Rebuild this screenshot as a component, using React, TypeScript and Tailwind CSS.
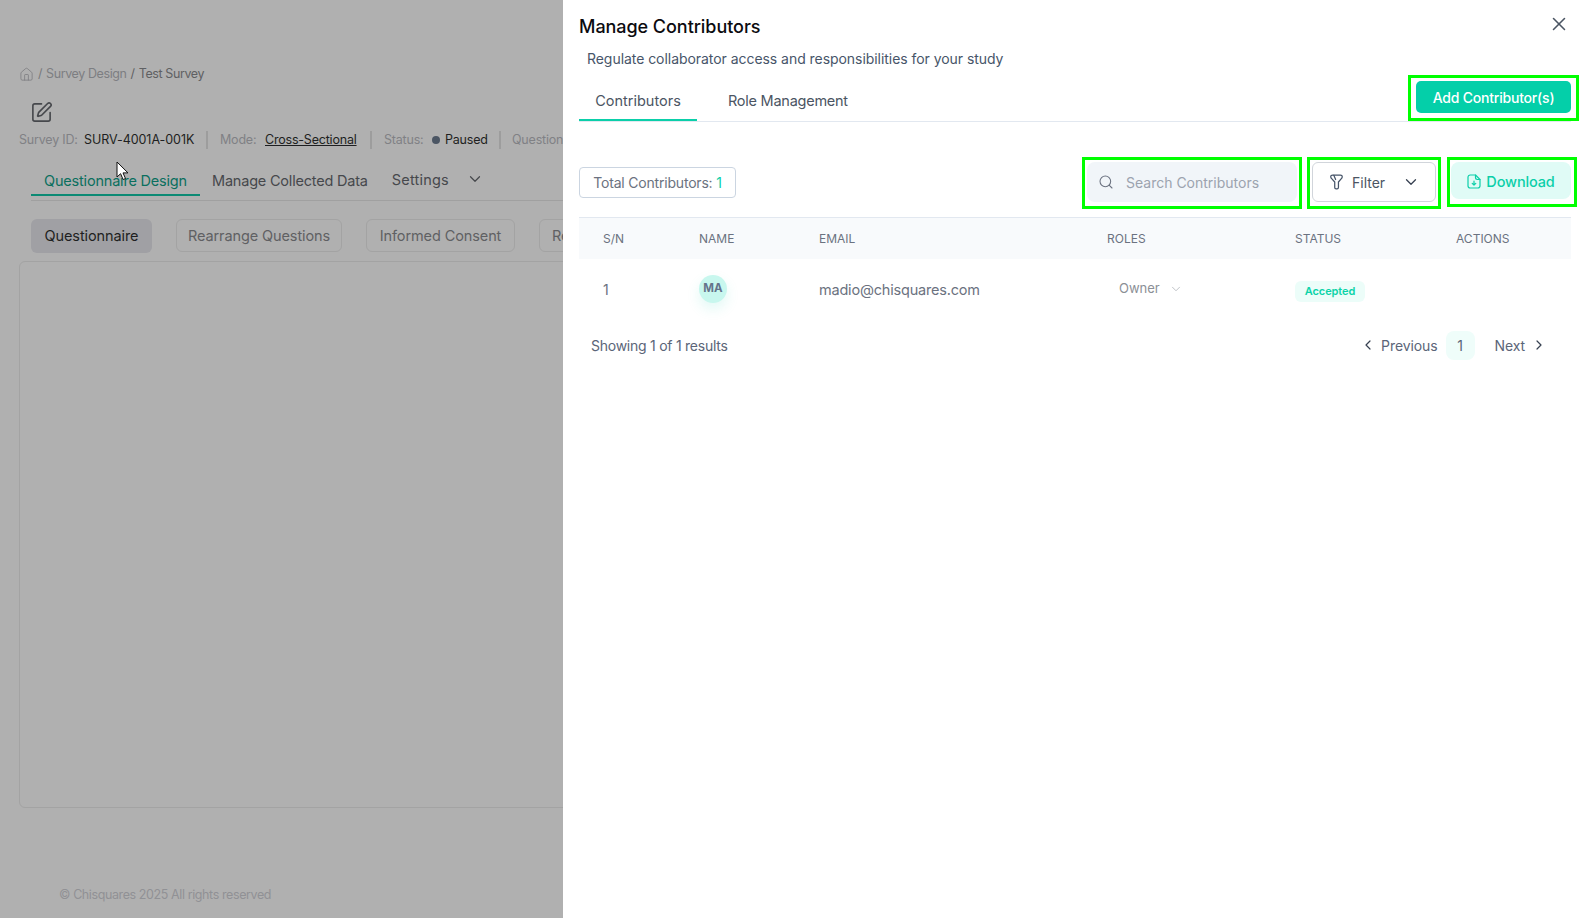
import React from 'react';
import { ChevronDown, ChevronLeft, ChevronRight, House, Search, SquarePen, X } from 'lucide-react';

const FunnelIcon = () => (
  <svg width="15" height="16" viewBox="0 0 16 18" fill="none" stroke="#475569" strokeWidth="1.4" strokeLinejoin="round" strokeLinecap="round">
    <path d="M1.5 3.2C1.5 2 2.5 1.2 3.6 1.2h8.8c1.1 0 2.1.8 2.1 2 0 .7-.3 1.3-.8 1.8L10.2 9v6c0 1.1-.8 1.8-1.6 1.8H7.6c-.9 0-1.6-.7-1.6-1.6V9L2.3 5c-.5-.5-.8-1.1-.8-1.8z" />
    <path d="M5 1.5 7 6.2" />
  </svg>
);

const DownloadIcon = () => (
  <svg width="14" height="15" viewBox="0 0 14 15" fill="none" stroke="#0bcfa9" strokeWidth="1.2" strokeLinecap="round" strokeLinejoin="round">
    <path d="M8.5 1H3.2C1.9 1 1 1.9 1 3.2v8.6C1 13.1 1.9 14 3.2 14h7.6c1.3 0 2.2-.9 2.2-2.2V5.5L8.5 1z" />
    <path d="M8.5 1v2.6c0 1.1.8 1.9 1.9 1.9H13" />
    <path d="M7 7v4M5.2 9.4 7 11.2l1.8-1.8" />
  </svg>
);

const Cursor = () => (
  <svg width="14" height="20" viewBox="0 0 14 20" className="absolute left-[116px] top-[161px]">
    <path d="M1 1v15l3.6-3.3 2.5 5.8 2.4-1-2.5-5.6H12z" fill="#fff" stroke="#111" strokeWidth="1" />
  </svg>
);

const Background = () => (
  <div className="relative h-full w-[563px] shrink-0 overflow-hidden bg-[#b0b0b0] pl-[19px] text-[13px] text-[#5f6063]">
    <div className="mt-[65px] flex h-[18px] items-center gap-[4px] whitespace-nowrap text-[12.5px] tracking-[-0.4px]">
      <House size={15} strokeWidth={1.3} className="text-[#7c7d80]" />
      <span className="text-[#77787b]">/</span>
      <span className="text-[#7d7e82]">Survey Design</span>
      <span>/</span>
      <span>Test Survey</span>
    </div>
    <SquarePen size={23} strokeWidth={1.7} className="ml-[11px] mt-[18px] text-[#46484c]" />
    <div className="mt-[6px] flex h-[20px] w-[700px] items-center whitespace-nowrap text-[12.5px] tracking-[-0.2px]">
      <span className="w-[65px] text-[#808185]">Survey ID:</span>
      <span className="w-[122px] tracking-[-0.05px] text-[#1e1f21]">SURV-4001A-001K</span>
      <span className="h-[18px] w-[2px] bg-[#9d9d9d]" />
      <span className="ml-[12px] w-[45px] text-[#808185]">Mode:</span>
      <span className="w-[105px] text-[#1e1f21] underline">Cross-Sectional</span>
      <span className="h-[18px] w-[2px] bg-[#9d9d9d]" />
      <span className="ml-[12px] w-[48px] text-[#808185]">Status:</span>
      <span className="h-[8px] w-[8px] rounded-full bg-[#4b5563]" />
      <span className="ml-[5px] w-[54px] text-[#1e1f21]">Paused</span>
      <span className="h-[18px] w-[2px] bg-[#9d9d9d]" />
      <span className="ml-[11px] text-[#808185]">Questions</span>
    </div>
    <div className="ml-[12px] mt-[9px] flex h-[42px] w-[600px] items-stretch border-b border-[#a0a0a0] text-[14.5px] whitespace-nowrap">
      <span className="mb-[4px] w-[169px] border-b-2 border-[#0b8a74] pt-[11px] text-center tracking-[-0.2px] text-[#0a6f5e]">Questionnaire Design</span>
      <span className="ml-[12px] pt-[11px] tracking-[-0.2px] text-[#46484c]">Manage Collected Data</span>
      <span className="ml-[24px] pt-[10px] tracking-[0.2px] text-[#46484c]">Settings</span>
      <ChevronDown size={18} strokeWidth={1.6} className="ml-[17px] mt-[11px] text-[#46484c]" />
    </div>
    <div className="ml-[12px] mt-[18px] flex w-[700px] items-start gap-[24px] whitespace-nowrap text-[14.5px] tracking-[-0.1px]">
      <span className="flex h-[34px] w-[121px] items-center justify-center rounded-md bg-[#a0a0a4] text-[#1e1f21]">Questionnaire</span>
      <span className="flex h-[33px] w-[166px] items-center justify-center rounded-md border border-[#a3a3a3] text-[#5f6063]">Rearrange Questions</span>
      <span className="flex h-[33px] w-[149px] items-center justify-center rounded-md border border-[#a3a3a3] text-[#5f6063]">Informed Consent</span>
      <span className="flex h-[33px] w-[100px] items-center rounded-md border border-[#a3a3a3] pl-[12px] text-[#5f6063]">Review</span>
    </div>
    <div className="mt-[8px] h-[547px] w-[600px] rounded-md border border-[#a3a3a3]" />
    <div className="ml-[40px] mt-[78px] whitespace-nowrap text-[12.5px] tracking-[-0.4px] text-[#909195]">© Chisquares 2025 All rights reserved</div>
    <Cursor />
  </div>
);

const Highlight = ({ className, children }: { className: string; children: React.ReactNode }) => (
  <div className={`shrink-0 border-[3px] border-[#00ff00] ${className}`}>{children}</div>
);

const columns = 'grid grid-cols-[96px_120px_288px_188px_161px_1fr] pl-6';

const App = () => {
  return (
    <div className="flex h-[918px] w-[1584px] overflow-hidden bg-white font-['Inter',sans-serif]">
      <Background />
      <div className="relative min-w-0 flex-1 pl-4 pr-[13px]">
        <h1 className="pt-[15px] text-[18px] font-medium leading-[24px] tracking-[-0.05px] text-[#0b0b0f]">Manage Contributors</h1>
        <p className="ml-2 mt-[11px] text-[14px] leading-[18px] tracking-[-0.05px] text-[#475569]">
          Regulate collaborator access and responsibilities for your study
        </p>
        <button className="absolute right-[14px] top-[13px] text-[#4b5563]">
          <X size={22} strokeWidth={1.7} />
        </button>

        <div className="mt-[7px] flex h-[47px] items-end justify-between border-b border-[#e2e8f0]">
          <div className="flex text-[14.5px] tracking-[-0.1px] text-[#4b5563]">
            <span className="-mb-px flex h-[38px] w-[118px] items-center justify-center border-b-2 border-[#0bcfa9] pb-[1px] tracking-[0px]">Contributors</span>
            <span className="ml-[31px] flex h-[38px] items-center pb-[3px] tracking-[-0.25px]">Role Management</span>
          </div>
          <div className="relative">
            <Highlight className="absolute -top-[46px] right-[-8px] h-[46px] w-[171px] p-[3px] pl-[5px] pr-[5px]">
              <button className="h-[32px] w-[155px] rounded-[5px] bg-[#04cfa9] text-[14px] font-medium tracking-[-0.2px] text-white">
                Add Contributor(s)
              </button>
            </Highlight>
          </div>
        </div>

        <div className="mt-[35px] flex items-start">
          <div className="mt-[10px] flex h-[31px] w-[157px] shrink-0 items-center justify-center rounded border border-[#cbd5e1] text-[14px] tracking-[-0.2px] text-[#6b7280]">
            Total Contributors:&nbsp;<span className="text-[#0bcfa9]">1</span>
          </div>
          <Highlight className="ml-[346px] h-[52px] w-[220px] px-[2px] pt-[2px]">
            <div className="flex h-[40px] items-center rounded-lg bg-[#f1f5f9] pl-[11px] text-[14px] text-[#9ca3af]">
              <Search size={16} strokeWidth={1.6} className="text-[#6b7280]" />
              <span className="ml-[12px]">Search Contributors</span>
            </div>
          </Highlight>
          <Highlight className="ml-[5px] h-[52px] w-[134px] px-[2px] pt-[2px]">
            <div className="flex h-[40px] items-center rounded-md border border-[#d1d5db] pl-[16px] text-[14px] text-[#4b5563]">
              <FunnelIcon />
              <span className="ml-[8px]">Filter</span>
              <ChevronDown size={18} strokeWidth={1.7} className="ml-[17px] text-[#374151]" />
            </div>
          </Highlight>
          <Highlight className="ml-[6px] h-[50px] w-[130px] pl-[1px] pt-[2px]">
            <div className="flex h-[37px] w-[120px] items-center justify-center gap-[5px] rounded-lg bg-[#e0fbf6] pt-[2px] text-[14.5px] font-medium tracking-[-0.15px] text-[#0bcfa9]">
              <DownloadIcon />
              Download
            </div>
          </Highlight>
        </div>

        <div className={`${columns} mt-[8px] h-[42px] items-center border-t border-[#e2e8f0] bg-[#f8fafc] text-[12px] text-[#6b7280]`}>
          <span>S/N</span>
          <span>NAME</span>
          <span>EMAIL</span>
          <span>ROLES</span>
          <span>STATUS</span>
          <span>ACTIONS</span>
        </div>
        <div className={`${columns} h-[62px] items-center text-[14px] text-[#6b7280]`}>
          <span className="mb-[2px]">1</span>
          <span className="mb-[2px] flex h-[28px] w-[28px] items-center justify-center rounded-full bg-[#c8f7ee] text-[11.5px] font-bold text-[#64748b] shadow-[0_6px_14px_rgba(11,207,169,0.12)]">MA</span>
          <span className="text-[14.5px] tracking-[-0.2px]">madio@chisquares.com</span>
          <span className="mb-[2px] flex items-center pl-3 text-[13px] text-[#8b8f96]">
            Owner
            <ChevronDown size={14} strokeWidth={1.2} className="ml-[9px] text-[#a5a9b0]" />
          </span>
          <span className="mt-[3px] flex h-[21px] w-[70px] items-center justify-center rounded-md bg-[#ecfdf9] text-[11px] font-semibold tracking-[-0.1px] text-[#0bd3a8]">Accepted</span>
          <span />
        </div>
        <div className="mt-[7px] flex h-[34px] items-center justify-between pl-3 pr-[24px] text-[14px] tracking-[-0.1px] text-[#5b6578]">
          <span className="tracking-[-0.25px]">Showing 1 of 1 results</span>
          <div className="flex items-center">
            <ChevronLeft size={16} strokeWidth={1.8} className="text-[#374151]" />
            <span className="ml-[5px]">Previous</span>
            <span className="ml-[8px] flex h-[29px] w-[29px] items-center justify-center rounded-lg bg-[#effdfa]">1</span>
            <span className="ml-[20px]">Next</span>
            <ChevronRight size={16} strokeWidth={1.8} className="ml-[6px] text-[#374151]" />
          </div>
        </div>
      </div>
    </div>
  );
};

export default App;
